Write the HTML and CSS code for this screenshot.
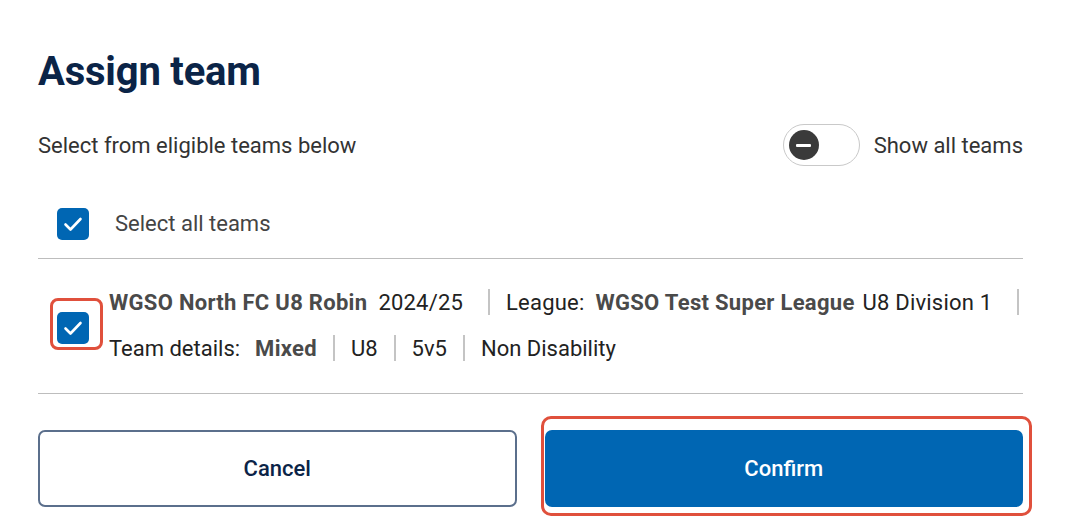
FILE: index.html
```html
<!DOCTYPE html>
<html lang="en">
<head>
<meta charset="utf-8">
<title>Assign team</title>
<link rel="stylesheet" href="styles.css">
</head>
<body>
<div class="dialog">
  <h1 class="title">Assign team</h1>
  <div class="subhead">
    <span class="subhead-text">Select from eligible teams below</span>
    <label class="toggle-wrap">
      <span class="toggle"><span class="knob"><span class="minus"></span></span></span>
      <span class="toggle-label">Show all teams</span>
    </label>
  </div>
  <div class="select-all">
    <span class="checkbox">
      <svg viewBox="0 0 32 32" width="32" height="32"><path d="M8.5 16.5 L13.5 21.5 L23.5 11" fill="none" stroke="#fff" stroke-width="2.6" stroke-linecap="round" stroke-linejoin="round"/></svg>
    </span>
    <span class="select-all-label">Select all teams</span>
  </div>
  <div class="team-row">
    <div class="check-cell">
      <span class="checkbox">
        <svg viewBox="0 0 32 32" width="32" height="32"><path d="M8.5 16.5 L13.5 21.5 L23.5 11" fill="none" stroke="#fff" stroke-width="2.6" stroke-linecap="round" stroke-linejoin="round"/></svg>
      </span>
      <span class="highlight highlight-check"></span>
    </div>
    <div class="team-info">
      <div class="info-line line-1">
        <span class="strong">WGSO North FC U8 Robin</span>
        <span class="val gap-s">2024/25</span>
        <span class="sep"></span>
        <span class="val">League:</span>
        <span class="strong gap-s">WGSO Test Super League</span>
        <span class="val gap-xs">U8 Division 1</span>
        <span class="sep"></span>
      </div>
      <div class="info-line line-2">
        <span class="val">Team details:</span>
        <span class="strong gap-m">Mixed</span>
        <span class="sep"></span>
        <span class="val">U8</span>
        <span class="sep"></span>
        <span class="val">5v5</span>
        <span class="sep"></span>
        <span class="val">Non Disability</span>
      </div>
    </div>
  </div>
  <div class="actions">
    <button class="btn btn-cancel" type="button">Cancel</button>
    <div class="confirm-wrap">
      <button class="btn btn-confirm" type="button">Confirm</button>
      <span class="highlight highlight-confirm"></span>
    </div>
  </div>
</div>
</body>
</html>
```
FILE: styles.css
```css
* { box-sizing: border-box; }
html, body { margin: 0; padding: 0; background: #fff; }
body {
  font-family: Roboto, "Liberation Sans", Arial, sans-serif;
  color: #222;
}
.dialog {
  width: 1075px;
  padding: 48px 52px 22px 38px;
}
.title {
  margin: 0;
  font-size: 40px;
  line-height: 48px;
  font-weight: 700;
  color: #0b2447;
  letter-spacing: -0.2px;
}
.subhead {
  display: flex;
  align-items: center;
  justify-content: space-between;
  margin-top: 28px;
  height: 42px;
}
.subhead-text {
  font-size: 22px;
  color: #333;
}
.toggle-wrap {
  display: flex;
  align-items: center;
  gap: 14px;
}
.toggle {
  display: flex;
  align-items: center;
  width: 77px;
  height: 42px;
  border: 1px solid #c9c9c9;
  border-radius: 21px;
  padding-left: 5px;
}
.knob {
  width: 30px;
  height: 30px;
  border-radius: 50%;
  background: #3a3a3a;
  display: flex;
  align-items: center;
  justify-content: center;
}
.minus {
  width: 15px;
  height: 3px;
  background: #fff;
  border-radius: 1px;
}
.toggle-label {
  font-size: 22px;
  color: #333;
}
.select-all {
  display: flex;
  align-items: flex-start;
  gap: 26px;
  padding: 42px 0 0 19px;
  height: 93px;
  border-bottom: 1px solid #bdbdbd;
}
.checkbox {
  display: block;
  width: 32px;
  height: 32px;
  border-radius: 5px;
  background: #0066b3;
  flex: none;
}
.checkbox svg { display: block; }
.select-all-label {
  font-size: 22px;
  line-height: 32px;
  color: #444;
}
.team-row {
  display: flex;
  align-items: flex-start;
  gap: 20px;
  padding: 27px 0 0 19px;
  height: 135px;
  border-bottom: 1px solid #bdbdbd;
}
.check-cell {
  position: relative;
  margin-top: 26px;
}
.highlight {
  position: absolute;
  border: 3px solid #e0503c;
  border-radius: 9px;
  pointer-events: none;
}
.highlight-check {
  left: -7px;
  top: -14px;
  width: 53px;
  height: 52px;
  border-radius: 8px;
}
.team-info {
  display: flex;
  flex-direction: column;
  gap: 14px;
}
.info-line {
  display: flex;
  align-items: center;
  height: 32px;
  font-size: 22px;
  white-space: nowrap;
}
.strong {
  font-weight: 700;
  color: #4a4a4a;
  letter-spacing: 0.3px;
}
.val { color: #222; }
.gap-s { margin-left: 11px; }
.gap-xs { margin-left: 8px; }
.gap-m { margin-left: 15px; }
.sep {
  display: inline-block;
  width: 2px;
  height: 26px;
  background: #c4c4c4;
}
.line-1 .sep { margin: 0 16px 0 25px; }
.line-2 .sep { margin: 0 16px 0 16px; }
.line-1 .val { letter-spacing: 0.2px; }
.actions {
  display: grid;
  grid-template-columns: 1fr 1fr;
  gap: 28px;
  padding-top: 36px;
}
.btn {
  height: 77px;
  border-radius: 7px;
  font-family: inherit;
  font-size: 22px;
  font-weight: 500;
  cursor: pointer;
}
.btn-cancel {
  width: 100%;
  background: #fff;
  border: 2px solid #5b6f8c;
  color: #0b2447;
}
.confirm-wrap {
  position: relative;
  display: flex;
}
.btn-confirm {
  width: 100%;
  background: #0066b3;
  border: none;
  color: #fff;
}
.highlight-confirm {
  left: -4px;
  top: -14px;
  right: -9px;
  bottom: -9px;
  border-radius: 10px;
}
```
